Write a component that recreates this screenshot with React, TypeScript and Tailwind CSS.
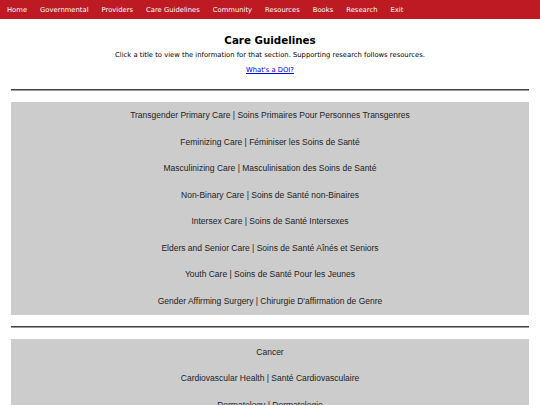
const navLinks = [
  "Home",
  "Governmental",
  "Providers",
  "Care Guidelines",
  "Community",
  "Resources",
  "Books",
  "Research",
  "Exit",
];

const careItems = [
  "Transgender Primary Care | Soins Primaires Pour Personnes Transgenres",
  "Feminizing Care | Féminiser les Soins de Santé",
  "Masculinizing Care | Masculinisation des Soins de Santé",
  "Non-Binary Care | Soins de Santé non-Binaires",
  "Intersex Care | Soins de Santé Intersexes",
  "Elders and Senior Care | Soins de Santé Aînés et Seniors",
  "Youth Care | Soins de Santé Pour les Jeunes",
  "Gender Affirming Surgery | Chirurgie D'affirmation de Genre",
];

const healthItems = [
  "Cancer",
  "Cardiovascular Health | Santé Cardiovasculaire",
  "Dermatology | Dermatologie",
  "Endocrinology | Endocrinologie",
];

const Divider = () => (
  <div className="mx-[11px] h-[2px] border-t border-[#444] bg-[#9a9a9a]" />
);

const Section = ({ items }: { items: string[] }) => (
  <div className="mx-[11px] bg-[#cccccc] text-[#222]">
    {items.map((item) => (
      <button
        key={item}
        className="flex h-[26.6px] w-full items-center justify-center font-[family-name:Liberation_Sans,Arial,sans-serif] text-[8.5px]"
      >
        {item}
      </button>
    ))}
  </div>
);

export default function App() {
  return (
    <div className="min-h-screen bg-white font-[family-name:DejaVu_Sans,Verdana,sans-serif]">
      {/* Top navigation */}
      <nav className="flex h-[19px] items-center gap-[13px] bg-[#bd1a24] pl-[7px] pt-[1px] text-[6.8px] text-white">
        {navLinks.map((link) => (
          <a key={link} href="#" className="whitespace-nowrap">
            {link}
          </a>
        ))}
      </nav>

      {/* Header */}
      <div className="flex flex-col items-center pt-[13px] text-black">
        <h2 className="text-[10.3px] font-bold leading-[16px]">Care Guidelines</h2>
        <p className="mt-[2px] text-[6.8px] leading-[10px]">
          Click a title to view the information for that section. Supporting
          research follows resources.
        </p>
        <a href="#" className="mt-[5px] text-[6.8px] leading-[10px] text-[#0000ee] underline">
          What's a DOI?
        </a>
      </div>

      <div className="mt-[14px] flex flex-col gap-[11px]">
        <Divider />
        <Section items={careItems} />
        <Divider />
        <Section items={healthItems} />
      </div>
    </div>
  );
}
